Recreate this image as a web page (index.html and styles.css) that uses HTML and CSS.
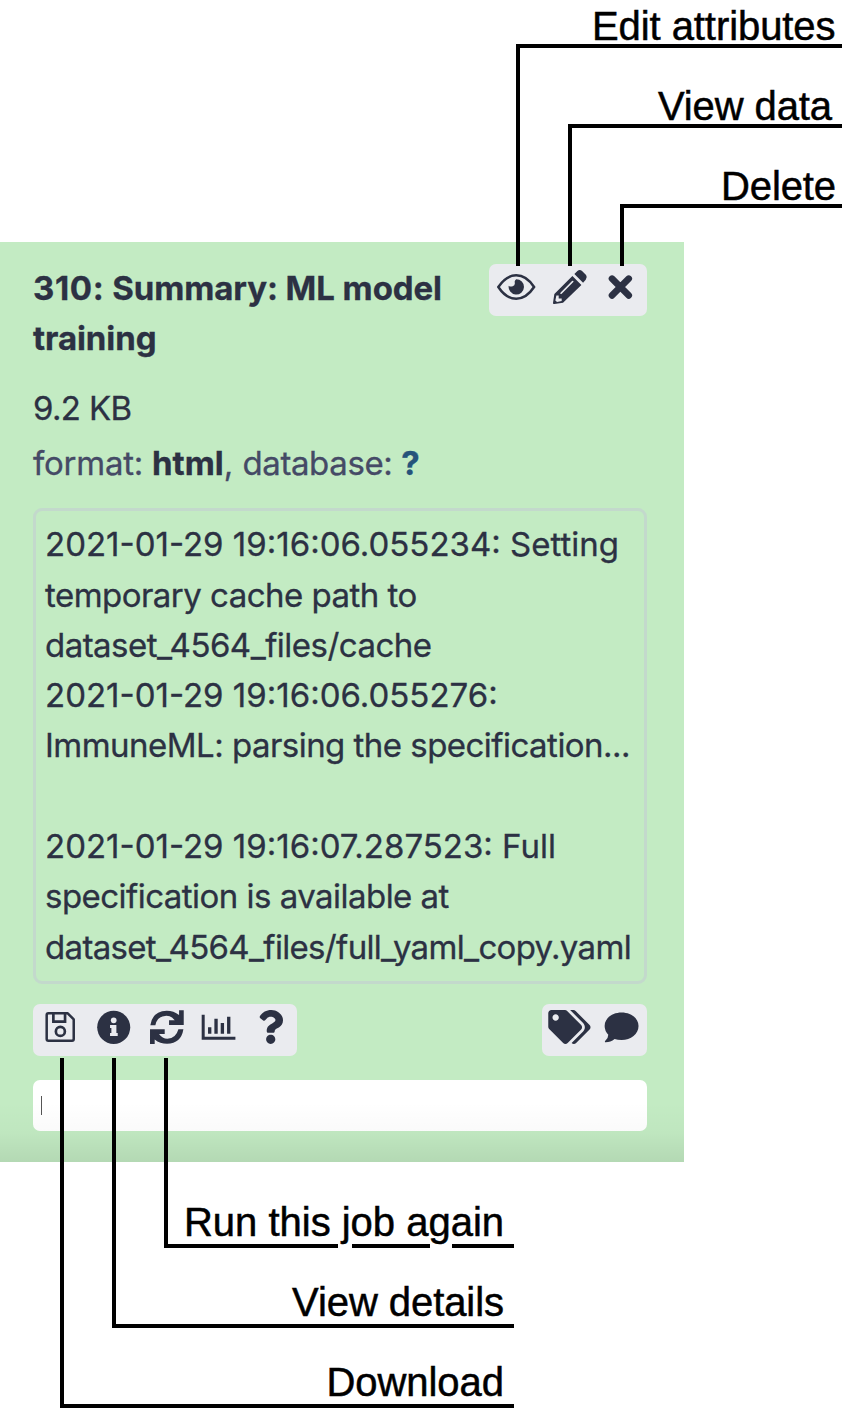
FILE: index.html
```html
<!DOCTYPE html>
<html lang="en">
<head>
<meta charset="utf-8">
<title>History item</title>
<link rel="stylesheet" href="styles.css">
</head>
<body>
<main class="dataset">
  <header class="head">
    <h1 class="title"><span class="number">310:</span> Summary: ML model<br>training</h1>
    <div class="tools">
      <svg class="icon" viewBox="27 27 158 158"><path d="M55 96Q78 61 108.500 61T162 96Q139 131 108.500 131T55 96Z" fill="none" stroke="#2c3143" stroke-width="7.500"/><path d="M108.500 72.500A23 23 0 1 1 86 92Q90 96 98 94Q106 91 104 82Q103 77 108.500 72.500Z"/></svg>
      <svg class="icon" viewBox="185 27 158 158"><path fill-rule="evenodd" d="M218 143L222 117L276 63L303 90L248 143L222 147Q217 148 218 143ZM228 121L225 136L230 141L244 138V130H235V121ZM241 112L275 78Q278 76 279 78T278 82L244 116Q241 118 240 116T241 112ZM282 57L291 48Q298 42 305 48L317 60Q322 67 316 74L308 83Z"/></svg>
      <svg class="icon" viewBox="343 27 158 158"><path d="M397 71L447 121M447 71L397 121" stroke="#2c3143" stroke-width="20" stroke-linecap="round"/></svg>
    </div>
  </header>
  <p class="size">9.2 KB</p>
  <p class="meta"><span class="key">format: </span><b>html</b>, <span class="key-wide">database: </span><b class="link">?</b></p>
  <div class="log">2021-01-29 19:16:06.055234: Setting
<span class="prose">temporary cache path to</span>
<span class="prose">dataset_4564_files/cache</span>
2021-01-29 19:16:06.055276:
<span class="prose">ImmuneML: parsing the specification...</span>

2021-01-29 19:16:07.287523: Full
<span class="prose">specification is available at</span>
<span class="prose path">dataset_4564_files/full_yaml_copy.yaml</span></div>
  <div class="actions">
    <div class="tools">
      <svg class="icon" viewBox="39 27 158 158"><g fill="none" stroke="#2c3143" stroke-width="7.500"><path d="M85 55H143L161 73V132Q161 137 156 137H85Q80 137 80 132V60Q80 55 85 55Z" stroke-linejoin="round"/><path d="M100 55V80H135V55" stroke-width="8"/><circle cx="121" cy="109" r="13.500" stroke-width="8"/></g></svg>
      <svg class="icon" viewBox="197 27 158 158"><circle cx="280" cy="97" r="49.500"/><g fill="#eaebef"><circle cx="280" cy="76" r="8.500"/><path d="M269 90H288V114H292V123H269V114H273V99H269Z"/></g></svg>
      <svg class="icon" viewBox="355 27 158 158"><path d="M389 91Q395 48 438 47Q459 47 475 60V46H489V90H445V76H462Q452 62 437 62Q409 63 404 91ZM388 103H432V117H415Q425 131 440 131Q466 130 473 103H488Q481 146 439 146Q418 146 402 133V147H388Z"/></svg>
      <svg class="icon" viewBox="514 27 158 158"><path d="M546 59H555V125H647V134H546ZM565 97H575V116H565ZM584 71H594V116H584ZM603 84H613V116H603ZM622 65H632V116H622Z"/></svg>
      <svg class="icon" viewBox="0 0 52.800 52.800"><path transform="translate(14 6) scale(.0664)" d="M202.021 0C122.202 0 70.503 32.703 29.914 91.026c-7.363 10.580-5.093 25.086 5.178 32.874l43.138 32.709c10.373 7.865 25.132 6.026 33.253-4.148 25.049-31.381 43.630-49.449 82.757-49.449 30.764 0 68.816 19.799 68.816 49.631 0 22.552-18.617 34.134-48.993 51.164-35.423 19.860-82.299 44.576-82.299 106.405V320c0 13.255 10.745 24 24 24h72.471c13.255 0 24-10.745 24-24v-5.773c0-42.860 125.268-44.645 125.268-160.627C377.504 66.256 286.902 0 202.021 0zM192 373.459c-38.196 0-69.271 31.075-69.271 69.271 0 38.195 31.075 69.270 69.271 69.270s69.271-31.075 69.271-69.271-31.075-69.270-69.271-69.270z"/></svg>
    </div>
    <div class="tools tools-end">
      <svg class="icon" viewBox="0 0 52.800 52.800"><path transform="translate(6.300 6) scale(.0664)" d="M497.941 225.941L286.059 14.059A48 48 0 0 0 252.118 0H48C21.490 0 0 21.490 0 48v204.118a48 48 0 0 0 14.059 33.941l211.882 211.882c18.744 18.745 49.136 18.746 67.882 0l204.118-204.118c18.745-18.745 18.745-49.137 0-67.882zM112 160c-26.510 0-48-21.490-48-48s21.490-48 48-48 48 21.490 48 48-21.490 48-48 48zm513.941 133.823L421.823 497.941c-18.745 18.745-49.137 18.745-67.882 0l-.36-.36L527.640 323.522c16.999-16.999 26.360-39.600 26.360-63.640s-9.362-46.641-26.360-63.640L331.397 0h48.721a48 48 0 0 1 33.941 14.059l211.882 211.882c18.745 18.745 18.745 49.137 0 67.882z"/></svg>
      <svg class="icon" viewBox="193 42 158 158"><path d="M273 67C301 67 324 84 324 108S301 150 273 150Q261 150 252 147Q240 157 225 157Q221 156 224 152Q233 144 233 134Q222 123 222 108C222 84 245 67 273 67Z"/></svg>
    </div>
  </div>
  <div class="tag-input"><i class="caret"></i></div>
</main>
<svg class="callouts" viewBox="0 0 852 1416">
  <g class="rule">
    <path d="M842 46H518V266M842 126H570V266M842 206H622V266"/>
    <path d="M166 1058V1246H338M352 1246H430M452 1246H514M114 1058V1326H514M62 1058V1406H514"/>
  </g>
  <g class="label">
    <text x="592" y="40" textLength="243.500">Edit attributes</text>
    <text x="658" y="120" textLength="174">View data</text>
    <text x="721" y="200" textLength="115">Delete</text>
    <text x="184" y="1236" textLength="320">Run this job again</text>
    <text x="292" y="1316" textLength="212">View details</text>
    <text x="326.500" y="1396" textLength="177.500">Download</text>
  </g>
</svg>
</body>
</html>
```
FILE: styles.css
```css
* { box-sizing: border-box; }
body {
  margin: 0;
  height: 1416px;
  padding-top: 242px;
  background: #fff;
  position: relative;
  overflow: hidden;
}
.dataset {
  position: relative;
  width: 683.5px;
  height: 920px;
  padding: 21px 36.5px 0 33px;
  background: #c3ebc3;
  color: #2c3143;
  font: 33px/50.3px Inter, "Liberation Sans", sans-serif;
  -webkit-text-stroke: .3px currentColor;
}
.dataset::after {
  content: "";
  position: absolute;
  inset: auto 0 0 0;
  height: 60px;
  background: linear-gradient(rgba(0,0,0,0), rgba(0,0,0,.018) 50%, rgba(0,0,0,.08));
}
.head, .actions { display: flex; justify-content: space-between; align-items: flex-start; }
.title { margin: 0; font-size: inherit; font-weight: 700; white-space: nowrap; letter-spacing: -.08px; }
.number { letter-spacing: .65px; }
.head .tools { margin-top: 1px; }
.tools { display: flex; height: 52px; border-radius: 7px; background: #eaebef; }
.icon { width: 52.75px; height: 52.75px; fill: #2c3143; display: block; }
.tools-end .icon { width: 52.5px; }
.size { margin: 19.5px 0 0; letter-spacing: -.65px; }
.meta { margin: 5px 0 0; color: #454a66; white-space: nowrap; }
.meta b { color: #2c3143; }
.meta .link { color: #25537b; }
.key { letter-spacing: -.25px; }
.key-wide { letter-spacing: -.4px; }
.log {
  height: 476px;
  margin-top: 19.6px;
  padding: 8px 9px;
  border: 3px solid #c3d9cc;
  border-radius: 9px;
  white-space: pre;
}
.prose { letter-spacing: -.53px; }
.path { letter-spacing: -.67px; }
.actions { margin-top: 20px; }
.tag-input { height: 51px; margin-top: 23.5px; padding: 16px 8px; border-radius: 7px; background: #fff; }
.caret { display: block; width: 1px; height: 19px; background: #555; }
.callouts { position: absolute; left: 0; top: 0; width: 852px; height: 1416px; }
.rule { fill: none; stroke: #000; stroke-width: 4; }
.label { font: 40px "Liberation Sans", Arial, sans-serif; fill: #000; stroke: #000; stroke-width: .5; }
```
